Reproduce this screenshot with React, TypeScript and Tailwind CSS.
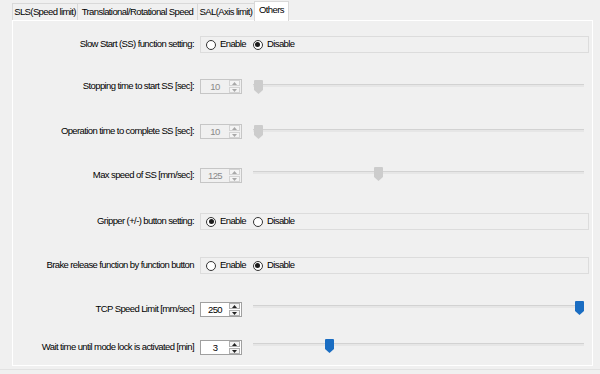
import React from 'react';

const tabs = [
  { label: 'SLS(Speed limit)', width: 'w-[66px]' },
  { label: 'Translational/Rotational Speed', width: 'w-[121px]' },
  { label: 'SAL(Axis limit)', width: 'w-[58px]' },
];

function Radio({ label, checked }: { label: string; checked?: boolean }) {
  return (
    <span className="flex items-center gap-[4px]">
      <span className="flex h-[10px] w-[10px] items-center justify-center rounded-full border border-[#333333] bg-white">
        {checked ? <span className="h-[5px] w-[5px] rounded-full bg-[#1a1a1a]" /> : null}
      </span>
      <span>{label}</span>
    </span>
  );
}

function Arrow({ up, color }: { up?: boolean; color: string }) {
  return (
    <svg width="5" height="3" viewBox="0 0 5 3">
      <path d={up ? 'M2.5 0 L5 3 L0 3 Z' : 'M0 0 L5 0 L2.5 3 Z'} fill={color} />
    </svg>
  );
}

function Spin({ value, disabled }: { value: string; disabled?: boolean }) {
  const arrow = disabled ? '#a8a8a8' : '#222222';
  const btn = disabled ? 'border-[#d4d4d4]' : 'border-[#b0b0b0]';
  return (
    <div
      className={`flex h-[15px] w-[42px] shrink-0 items-center border ${
        disabled ? 'border-[#c6c6c6] bg-[#f0f0f0] text-[#8a8a8a]' : 'border-[#a0a0a0] bg-white text-black'
      }`}
    >
      <span className="flex-1 text-center leading-none">{value}</span>
      <div className="mr-px flex w-[11px] flex-col gap-px">
        <div className={`flex h-[6px] items-center justify-center border ${btn} bg-[#f4f4f4]`}>
          <Arrow up color={arrow} />
        </div>
        <div className={`flex h-[6px] items-center justify-center border ${btn} bg-[#f4f4f4]`}>
          <Arrow color={arrow} />
        </div>
      </div>
    </div>
  );
}

function Slider({ offset, disabled, lift }: { offset: number; disabled?: boolean; lift?: boolean }) {
  return (
    <div className={`relative ml-[11px] mr-[5px] h-[14px] flex-1 ${lift ? '-translate-y-[2px]' : ''}`}>
      <div className="absolute left-0 right-0 top-[4px] h-[3px] border-t border-[#d2d2d2] bg-[#e6e6e6]" />
      <svg className="absolute top-0" style={{ left: offset }} width="9" height="14" viewBox="0 0 9 14">
        <path d="M1 0 H8 Q9 0 9 1 V10 L4.5 14 L0 10 V1 Q0 0 1 0 Z" fill={disabled ? '#cccccc' : '#1a6dc2'} />
      </svg>
    </div>
  );
}

function Row({ label, className, children }: { label: string; className: string; children: React.ReactNode }) {
  return (
    <div className={`flex items-center ${className}`}>
      <div className="w-[181px] shrink-0 whitespace-nowrap text-right">{label}</div>
      <div className="ml-[6px] flex flex-1 items-center">{children}</div>
    </div>
  );
}

function Group({ children }: { children: React.ReactNode }) {
  return <div className="flex h-full flex-1 items-center gap-[7px] border border-[#dcdcdc] pl-[5px]">{children}</div>;
}

export default function App() {
  return (
    <div className="h-[374px] w-[600px] overflow-hidden bg-[#f0f0f0] font-['Liberation_Sans',Arial,sans-serif] text-[9.5px] tracking-[-0.6px] text-black">
      <div className="flex h-[20px] items-end pl-[12px]">
        {tabs.map((t) => (
          <div
            key={t.label}
            className={`${t.width} -mr-px flex h-[17px] items-center justify-center whitespace-nowrap border border-b-0 border-[#d9d9d9] bg-[#f0f0f0]`}
          >
            {t.label}
          </div>
        ))}
        <div className="relative z-10 -mb-px flex h-[20px] w-[35px] items-center justify-center border border-b-0 border-[#d9d9d9] bg-white pb-[2px]">
          Others
        </div>
      </div>

      <div className="ml-[12px] flex h-[346px] w-[581px] flex-col border border-white pr-[3px]">
        <Row label="Slow Start (SS) function setting:" className="mt-[7px] h-[33px]">
          <Group>
            <Radio label="Enable" />
            <Radio label="Disable" checked />
          </Group>
        </Row>

        <Row label="Stopping time to start SS [sec]:" className="mt-[18px] h-[15px]">
          <Spin value="10" disabled />
          <Slider offset={1} disabled />
        </Row>

        <Row label="Operation time to complete SS [sec]:" className="mt-[30px] h-[15px]">
          <Spin value="10" disabled />
          <Slider offset={1} disabled />
        </Row>

        <Row label="Max speed of SS [mm/sec]:" className="mt-[29px] h-[15px]">
          <Spin value="125" disabled />
          <Slider offset={121} disabled lift />
        </Row>

        <Row label="Gripper (+/-) button setting:" className="mt-[22px] h-[33px]">
          <Group>
            <Radio label="Enable" checked />
            <Radio label="Disable" />
          </Group>
        </Row>

        <Row label="Brake release function by function button" className="mt-[11px] h-[33px]">
          <Group>
            <Radio label="Enable" />
            <Radio label="Disable" checked />
          </Group>
        </Row>

        <Row label="TCP Speed Limit [mm/sec]" className="mt-[20px] h-[15px]">
          <Spin value="250" />
          <Slider offset={322} lift />
        </Row>

        <Row label="Wait time until mode lock is activated [min]" className="mt-[23px] h-[15px]">
          <Spin value="3" />
          <Slider offset={72} lift />
        </Row>
      </div>
      <div className="mt-[3px] h-px bg-[#e2e2e2]" />
    </div>
  );
}
